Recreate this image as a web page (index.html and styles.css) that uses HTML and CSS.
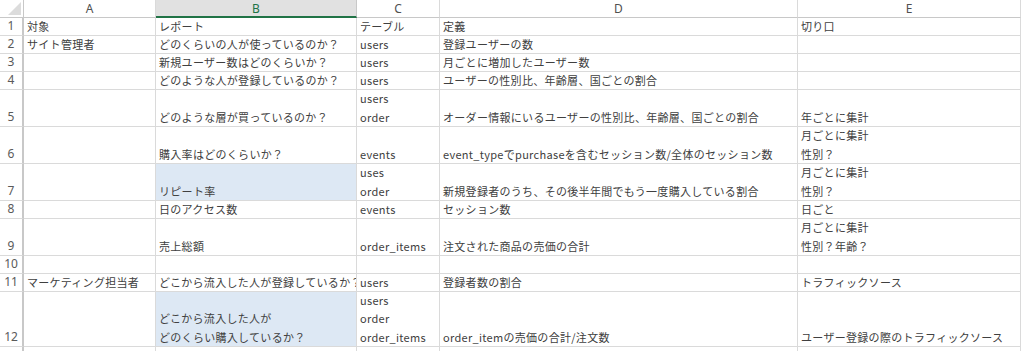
FILE: index.html
```html
<!DOCTYPE html>
<html lang="ja">
<head>
<meta charset="utf-8">
<link rel="stylesheet" href="styles.css">
</head>
<body>
<div class="sheet">
  <div class="corner"><span class="tri"></span></div>
  <div class="colhead">A</div>
  <div class="colhead active">B</div>
  <div class="colhead">C</div>
  <div class="colhead">D</div>
  <div class="colhead">E</div>

  <div class="rownum">1</div>
  <div class="cell">対象</div>
  <div class="cell">レポート</div>
  <div class="cell">テーブル</div>
  <div class="cell">定義</div>
  <div class="cell">切り口</div>

  <div class="rownum">2</div>
  <div class="cell">サイト管理者</div>
  <div class="cell">どのくらいの人が使っているのか？</div>
  <div class="cell">users</div>
  <div class="cell">登録ユーザーの数</div>
  <div class="cell"></div>

  <div class="rownum">3</div>
  <div class="cell"></div>
  <div class="cell">新規ユーザー数はどのくらいか？</div>
  <div class="cell">users</div>
  <div class="cell">月ごとに増加したユーザー数</div>
  <div class="cell"></div>

  <div class="rownum">4</div>
  <div class="cell"></div>
  <div class="cell">どのような人が登録しているのか？</div>
  <div class="cell">users</div>
  <div class="cell">ユーザーの性別比、年齢層、国ごとの割合</div>
  <div class="cell"></div>

  <div class="rownum">5</div>
  <div class="cell"></div>
  <div class="cell">どのような層が買っているのか？</div>
  <div class="cell"><span>users</span><span>order</span></div>
  <div class="cell">オーダー情報にいるユーザーの性別比、年齢層、国ごとの割合</div>
  <div class="cell">年ごとに集計</div>

  <div class="rownum">6</div>
  <div class="cell"></div>
  <div class="cell">購入率はどのくらいか？</div>
  <div class="cell">events</div>
  <div class="cell">event_typeでpurchaseを含むセッション数/全体のセッション数</div>
  <div class="cell"><span>月ごとに集計</span><span>性別？</span></div>

  <div class="rownum">7</div>
  <div class="cell"></div>
  <div class="cell sel">リピート率</div>
  <div class="cell"><span>uses</span><span>order</span></div>
  <div class="cell">新規登録者のうち、その後半年間でもう一度購入している割合</div>
  <div class="cell"><span>月ごとに集計</span><span>性別？</span></div>

  <div class="rownum">8</div>
  <div class="cell"></div>
  <div class="cell">日のアクセス数</div>
  <div class="cell">events</div>
  <div class="cell">セッション数</div>
  <div class="cell">日ごと</div>

  <div class="rownum">9</div>
  <div class="cell"></div>
  <div class="cell">売上総額</div>
  <div class="cell">order_items</div>
  <div class="cell">注文された商品の売価の合計</div>
  <div class="cell"><span>月ごとに集計</span><span>性別？年齢？</span></div>

  <div class="rownum">10</div>
  <div class="cell"></div>
  <div class="cell"></div>
  <div class="cell"></div>
  <div class="cell"></div>
  <div class="cell"></div>

  <div class="rownum">11</div>
  <div class="cell">マーケティング担当者</div>
  <div class="cell">どこから流入した人が登録しているか？</div>
  <div class="cell">users</div>
  <div class="cell">登録者数の割合</div>
  <div class="cell">トラフィックソース</div>

  <div class="rownum">12</div>
  <div class="cell"></div>
  <div class="cell sel"><span>どこから流入した人が</span><span>どのくらい購入しているか？</span></div>
  <div class="cell"><span>users</span><span>order</span><span>order_items</span></div>
  <div class="cell">order_itemの売価の合計/注文数</div>
  <div class="cell">ユーザー登録の際のトラフィックソース</div>

  <div class="rownum"></div>
  <div class="cell"></div>
  <div class="cell"></div>
  <div class="cell"></div>
  <div class="cell"></div>
  <div class="cell"></div>
</div>
</body>
</html>
```

FILE: styles.css
```css
html, body {
  margin: 0;
  padding: 0;
  background: #ffffff;
}

body {
  font-family: "Noto Sans CJK JP", "Noto Sans", sans-serif;
  color: #404040;
  overflow: hidden;
}

.sheet {
  display: grid;
  grid-template-columns: 24px 132px 201px 83px 358px 223px;
  grid-template-rows: 18px 18px 18px 18px 18px 37px 37px 37px 18px 37px 18px 18px 55px 18px;
  width: 1021px;
}

.corner {
  position: relative;
  background: #ffffff;
  border-right: 1px solid #c8c8c8;
  border-bottom: 1px solid #c8c8c8;
  box-sizing: border-box;
}

.tri {
  position: absolute;
  right: 2px;
  bottom: 2px;
  width: 0;
  height: 0;
  border-left: 13px solid transparent;
  border-bottom: 13px solid #dcdcdc;
}

.colhead {
  box-sizing: border-box;
  background: #ffffff;
  border-right: 1px solid #dadada;
  border-bottom: 1px solid #c8c8c8;
  font-family: "Noto Sans", sans-serif;
  font-size: 12px;
  line-height: 17px;
  color: #505050;
  text-align: center;
}

.colhead.active {
  background: #e1e1e1;
  color: #217346;
  border-bottom: 2px solid #217346;
  border-right-color: #c8c8c8;
}

.rownum {
  box-sizing: border-box;
  border-right: 2px solid #c8c8c8;
  border-bottom: 1px solid #dadada;
  font-family: "Noto Sans", sans-serif;
  font-size: 12px;
  line-height: 18px;
  color: #5a5a5a;
  text-align: center;
  display: flex;
  flex-direction: column;
  justify-content: flex-end;
}

.cell {
  box-sizing: border-box;
  border-right: 1px solid #dadada;
  border-bottom: 1px solid #dadada;
  padding-left: 3px;
  font-size: 11px;
  letter-spacing: 0.3px;
  line-height: 18px;
  white-space: nowrap;
  overflow: hidden;
  display: flex;
  flex-direction: column;
  justify-content: flex-end;
}

.cell span {
  display: block;
  line-height: 18.3px;
}

.cell.sel {
  background: #dde8f4;
}
```
